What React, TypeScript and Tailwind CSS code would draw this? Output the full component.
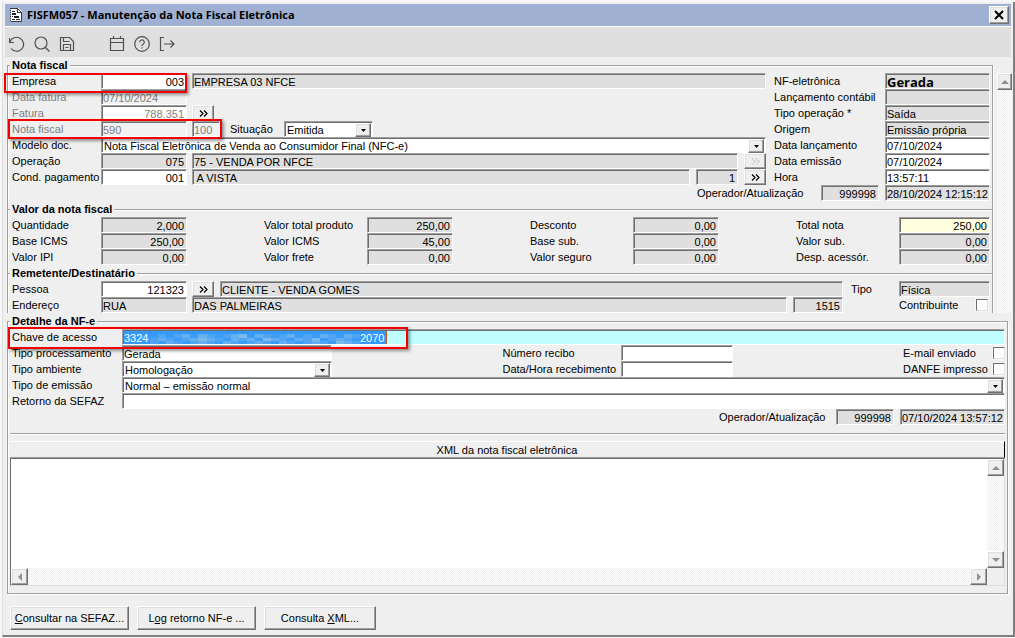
import React from 'react';
import clsx from 'clsx';

const DITHER = 'bg-[conic-gradient(#fff_25%,#ededed_0_50%,#fff_0_75%,#ededed_0)] bg-[length:2px_2px]';
const SUNKEN = 'h-4 border border-t-[#9f9f9f] border-l-[#9f9f9f] border-r-white border-b-white shadow-[inset_1px_1px_0_#6f6f6f]';
const RAISED = 'border border-t-white border-l-white border-r-[#6f6f6f] border-b-[#6f6f6f] bg-[#efefef] shadow-[inset_-1px_-1px_0_#9f9f9f,inset_1px_1px_0_#dfdfdf]';
const GROUP = 'border border-b-0 border-[#9f9f9f] shadow-[inset_1px_1px_0_#fff,1px_0_0_#fff]';

const totals = [
  [
    { id: 'quantidade', label: 'Quantidade', value: '2,000' },
    { id: 'total-produto', label: 'Valor total produto', value: '250,00' },
    { id: 'desconto', label: 'Desconto', value: '0,00' },
    { id: 'total-nota', label: 'Total nota', value: '250,00' },
  ],
  [
    { id: 'base-icms', label: 'Base ICMS', value: '250,00' },
    { id: 'valor-icms', label: 'Valor ICMS', value: '45,00' },
    { id: 'base-sub', label: 'Base sub.', value: '0,00' },
    { id: 'valor-sub', label: 'Valor sub.', value: '0,00' },
  ],
  [
    { id: 'valor-ipi', label: 'Valor IPI', value: '0,00' },
    { id: 'valor-frete', label: 'Valor frete', value: '0,00' },
    { id: 'valor-seguro', label: 'Valor seguro', value: '0,00' },
    { id: 'desp-acessor', label: 'Desp. acessór.', value: '0,00' },
  ],
];

const totalLabelWidths = ['w-[89px]', 'w-[103px]', 'w-[103px]', 'w-[103px]'];

const invoiceInfo = [
  { id: 'nf-eletronica', label: 'NF-eletrônica', value: 'Gerada', className: 'bg-[#dfdfdf] font-bold text-[13px] font-["Open_Sans",sans-serif]' },
  { id: 'lanc-contabil', label: 'Lançamento contábil', value: '', className: 'bg-[#dfdfdf]' },
  { id: 'tipo-operacao', label: 'Tipo operação *', value: 'Saída', className: 'bg-[#dfdfdf]' },
  { id: 'origem', label: 'Origem', value: 'Emissão própria', className: 'bg-[#dfdfdf]' },
  { id: 'data-lanc', label: 'Data lançamento', value: '07/10/2024', className: 'bg-white' },
  { id: 'data-emissao', label: 'Data emissão', value: '07/10/2024', className: 'bg-white' },
  { id: 'hora', label: 'Hora', value: '13:57:11', className: 'bg-white' },
];

// censored middle of the access key, one string per row of blocks
const mosaicRows = ['01012021012302101201021021', '12101232102120321021301210', '10210121021012102101210321'];
const mosaicColors = ['#3b9cf8', '#4fa5f4', '#64aff1', '#7cbaee'];

export default function App() {
  return (
    <div className="bg-[#f7f7f7] py-0.5 pl-0.5 font-['Liberation_Sans',sans-serif] text-[11px] leading-4 text-black">
      <main className="flex flex-col border-r-2 border-b-2 border-l border-r-[#7f7f7f] border-b-[#7f7f7f] border-l-[#dfdfdf] bg-[#efefef] pt-0.5 pl-0.5">
        <TitleBar />
        <Toolbar />
        <InvoiceArea />
        <DetailGroup />
        <footer className="flex gap-2 px-[5px] pt-3 pb-[5px]">
          <button className={clsx(RAISED, 'h-6 w-[119px]')}><u>C</u>onsultar na SEFAZ...</button>
          <button className={clsx(RAISED, 'h-6 w-[119px]')}>L<u>og</u> retorno NF-e ...</button>
          <button className={clsx(RAISED, 'h-6 w-[112px]')}>Consulta <u>X</u>ML...</button>
        </footer>
      </main>
    </div>
  );
}

function TitleBar() {
  return (
    <header className="mr-0.5 flex h-[22px] items-center bg-[#9fb0d2] pr-0.5 pl-1">
      <svg width="14" height="16" viewBox="0 0 14 16" shapeRendering="crispEdges">
        <path d="M2 1h7l4 4v10H2z" fill="#fff" />
        <path d="M1 1h8v1H1zM9 2h1v1H9zM10 3h1v1h-1zM11 4h1v1h-1zM12 5h1v10h-1zM2 14h11v1H2zM1 3h1v1H1zM1 5h1v1H1zM1 7h1v1H1zM1 9h1v1H1zM1 11h1v1H1zM1 13h1v1H1zM8 2h1v4H8zM8 5h4v1H8z" fill="#3a3a3a" />
        <path d="M3 4h3v1H3zM3 6h4v2H3zM5 9h5v2H5zM3 9h1v1H3zM3 12h3v1H3zM7 12h4v1H7z" fill="#222" />
      </svg>
      <h1 className="ml-1 font-['Open_Sans',sans-serif] text-[11px] font-bold">FISFM057 - Manutenção da Nota Fiscal Eletrônica</h1>
      <button aria-label="Fechar" className={clsx(RAISED, 'ml-auto flex h-[18px] w-5 items-center justify-center')}>
        <svg width="10" height="10" viewBox="0 0 10 10">
          <path d="M1 1l8 8M9 1l-8 8" stroke="#000" strokeWidth="2" />
        </svg>
      </button>
    </header>
  );
}

function Toolbar() {
  return (
    <nav className="mr-0.5 flex h-[31px] items-center border-t border-white bg-[#dfdfdf] pt-[3px] pl-1">
      <ToolButton label="Desfazer">
        <path d="M.5 2v4.500h4.500M.9 6.200A7 7 0 1 1 2 12.500" />
      </ToolButton>
      <ToolButton label="Pesquisar">
        <circle cx="7" cy="7" r="6" />
        <path d="M11.500 11.500l4 4" />
      </ToolButton>
      <ToolButton label="Salvar">
        <path d="M1.500 1.500h9l4 4v9h-13zM4.500 1.500v4h6M4.500 14.500v-6h7v6M6.500 11.500h3" />
      </ToolButton>
      <span className="w-[25px]" />
      <ToolButton label="Calendário">
        <path d="M1.500 2.500h13v12h-13zM1.500 6.500h13M4.500 0v3M11.500 0v3" />
      </ToolButton>
      <ToolButton label="Ajuda">
        <circle cx="8" cy="8" r="7.300" />
        <path d="M5.700 6.300a2.300 2.300 0 1 1 3.500 1.900c-.8.500-1.200.8-1.200 1.700M8 11.300v1.200" />
      </ToolButton>
      <ToolButton label="Sair">
        <path d="M5 1.500H1.500v13H5M5 8h10M11.500 4.500L15 8l-3.500 3.500" />
      </ToolButton>
    </nav>
  );
}

function ToolButton({ label, children }: { label: string; children: React.ReactNode }) {
  return (
    <button aria-label={label} className="w-[25px]">
      <svg width="16" height="16" viewBox="0 0 16 16" fill="none" stroke="#505050" strokeWidth="1.200">
        {children}
      </svg>
    </button>
  );
}

function InvoiceArea() {
  return (
    <div className="flex pr-px pl-0.5">
      <div className="min-w-0 flex-1">
        <fieldset className={clsx(GROUP, 'pr-0.5 pb-2 pl-1')}>
          <Legend>Nota fiscal</Legend>
          <div className="flex gap-2">
            <InvoiceFields />
            <div className="w-[216px]">
              {invoiceInfo.map((f) => (
                <div key={f.id} className="flex">
                  <Label id={f.id} className="w-[111px]">{f.label}</Label>
                  <Field id={f.id} value={f.value} className={clsx('w-[105px]', f.className)} />
                </div>
              ))}
            </div>
          </div>
          <AuditRow id="nota" date="28/10/2024 12:15:12" labelWidth="w-[124px]" />
        </fieldset>

        <fieldset className={clsx(GROUP, '-mt-2 pr-0.5 pb-2 pl-1')}>
          <Legend>Valor da nota fiscal</Legend>
          {totals.map((row, i) => (
            <div key={i} className="flex justify-between">
              {row.map((f, col) => (
                <div key={f.id} className="flex">
                  <Label id={f.id} className={totalLabelWidths[col]}>{f.label}</Label>
                  <Field
                    id={f.id}
                    value={f.value}
                    right
                    className={clsx(col === 3 ? 'w-[91px]' : 'w-[86px]', f.id === 'total-nota' ? 'bg-[#ffffdf]' : 'bg-[#dfdfdf]')}
                  />
                </div>
              ))}
            </div>
          ))}
        </fieldset>

        <fieldset className={clsx(GROUP, '-mt-2 pr-0.5 pl-1')}>
          <Legend>Remetente/Destinatário</Legend>
          <div className="flex">
            <Label id="pessoa" className="w-[89px]">Pessoa</Label>
            <Field id="pessoa" value="121323" right className="mr-[5px] w-[86px] bg-white" />
            <MoreButton label="Pessoa" />
            <Field id="pessoa-nome" value="CLIENTE - VENDA GOMES" className="ml-1.5 min-w-0 flex-1 bg-[#dfdfdf]" />
            <Label id="tipo" className="ml-2 w-12">Tipo</Label>
            <Field id="tipo" value="Física" className="w-[91px] bg-[#dfdfdf]" />
          </div>
          <div className="flex">
            <Label id="endereco" className="w-[89px]">Endereço</Label>
            <Field id="endereco" value="RUA" className="mr-[5px] w-[86px] bg-[#dfdfdf]" />
            <Field id="logradouro" value="DAS PALMEIRAS" className="mr-1.5 min-w-0 flex-1 bg-[#dfdfdf]" />
            <Field id="numero" value="1515" right className="w-[50px] bg-[#dfdfdf]" />
            <Label id="contribuinte" className="ml-14 w-[77px]">Contribuinte</Label>
            <Check id="contribuinte" />
            <span className="w-0.5" />
          </div>
        </fieldset>
      </div>

      <div className={clsx('mt-4 ml-1 flex w-[15px] flex-col', DITHER)}>
        <ScrollButton direction="up" label="Rolar para cima" />
      </div>
    </div>
  );
}

function InvoiceFields() {
  return (
    <div className="min-w-0 flex-1">
      <div className="relative flex">
        <Highlight className="top-0 -left-2 h-5 w-[183px]" />
        <Label id="empresa" className="w-[89px]">Empresa</Label>
        <Field id="empresa" value="003" right className="mr-[5px] w-[86px] bg-white" />
        <Field id="empresa-nome" value="EMPRESA 03 NFCE" className="min-w-0 flex-1 bg-[#dfdfdf]" />
      </div>
      <div className="flex text-[#808080]">
        <Label id="data-fatura" className="w-[89px]">Data fatura</Label>
        <Field id="data-fatura" value="07/10/2024" className="w-[86px] bg-[#f2f2f2]" />
      </div>
      <div className="flex text-[#808080]">
        <Label id="fatura" className="w-[89px]">Fatura</Label>
        <Field id="fatura" value="788.351" right className="mr-[5px] w-[86px] bg-white" />
        <MoreButton label="Fatura" />
      </div>
      <div className="relative flex">
        <Highlight className="-top-0.5 -left-1 h-5 w-[214px]" />
        <Label id="nota-fiscal" className="w-[89px] text-[#808080]">Nota fiscal</Label>
        <Field id="nota-fiscal" value="590" className="mr-[5px] w-[86px] bg-[#f2f2f2] text-[#808080]" />
        <Field id="serie" value="100" className="w-7 bg-[#f2f2f2] text-[#808080]" />
        <Label id="situacao" className="ml-2.5 w-[54px]">Situação</Label>
        <Select id="situacao" value="Emitida" className="w-[89px]" />
      </div>
      <div className="flex">
        <Label id="modelo" className="w-[89px]">Modelo doc.</Label>
        <Select id="modelo" value="Nota Fiscal Eletrônica de Venda ao Consumidor Final (NFC-e)" className="min-w-0 flex-1" />
      </div>
      <div className="flex">
        <Label id="operacao" className="w-[89px]">Operação</Label>
        <Field id="operacao" value="075" right className="mr-[5px] w-[86px] bg-[#dfdfdf]" />
        <Field id="operacao-nome" value="75 - VENDA POR NFCE" className="mr-1.5 min-w-0 flex-1 bg-[#dfdfdf]" />
        <MoreButton label="Operação" disabled />
      </div>
      <div className="flex">
        <Label id="pagamento" className="w-[89px]">Cond. pagamento</Label>
        <Field id="pagamento" value="001" right className="mr-[5px] w-[86px] bg-white" />
        <Field id="pagamento-nome" value=" A VISTA" className="mr-1.5 min-w-0 flex-1 bg-[#dfdfdf]" />
        <Field id="parcelas" value="1" right className="mr-1.5 w-[42px] bg-[#dfdfdf]" />
        <MoreButton label="Condição de pagamento" />
      </div>
    </div>
  );
}

function DetailGroup() {
  return (
    <fieldset className="mr-[5px] ml-0.5 border border-[#9f9f9f] pr-0.5 pb-[7px] pl-1 shadow-[inset_1px_1px_0_#fff,1px_1px_0_#fff]">
      <Legend>Detalhe da NF-e</Legend>
      <div className="relative flex">
        <Highlight className="-top-0.5 -left-1 h-[22px] w-[400px]" />
        <Label id="chave" className="w-[110px]">Chave de acesso</Label>
        <div className={clsx(SUNKEN, 'flex min-w-0 flex-1 items-center bg-[#bfffff] pt-px pl-px')}>
          <input id="chave" defaultValue="3324" className="h-[13px] w-[26px] bg-[#3399ff] text-white" />
          <svg width="210" height="13" preserveAspectRatio="none" viewBox="0 0 26 4" shapeRendering="crispEdges" className="bg-[#3399ff]">
            {mosaicRows.map((row, y) =>
              row.split('').map((c, x) => <rect key={x + '-' + y} x={x} y={y + 1} width="1" height="1" fill={mosaicColors[Number(c)]} />)
            )}
          </svg>
          <input aria-label="Final da chave" defaultValue="2070" className="h-[13px] w-[27px] border-r border-[#c06020] bg-[#3399ff] text-white" />
        </div>
      </div>
      <div className="flex">
        <Label id="processamento" className="w-[110px]">Tipo processamento</Label>
        <Field id="processamento" value="Gerada" className="w-[210px] bg-white" />
        <span className="flex-1" />
        <Label id="recibo" className="w-[118px]">Número recibo</Label>
        <Field id="recibo" value="" className="w-[112px] bg-white" />
        <span className="flex-1" />
        <Label id="email" className="w-[90px]">E-mail enviado</Label>
        <Check id="email" />
      </div>
      <div className="flex">
        <Label id="ambiente" className="w-[110px]">Tipo ambiente</Label>
        <Select id="ambiente" value="Homologação" className="w-[210px]" />
        <span className="flex-1" />
        <Label id="recebimento" className="w-[118px]">Data/Hora recebimento</Label>
        <Field id="recebimento" value="" className="w-[112px] bg-white" />
        <span className="flex-1" />
        <Label id="danfe" className="w-[90px]">DANFE impresso</Label>
        <Check id="danfe" />
      </div>
      <div className="flex">
        <Label id="emissao" className="w-[110px]">Tipo de emissão</Label>
        <Select id="emissao" value="Normal – emissão normal" className="min-w-0 flex-1" />
      </div>
      <div className="flex">
        <Label id="retorno" className="w-[110px]">Retorno da SEFAZ</Label>
        <Field id="retorno" value="" className="min-w-0 flex-1 bg-white" />
      </div>
      <AuditRow id="detalhe" date="07/10/2024 13:57:12" labelWidth="w-[117px]" />

      <div className="-ml-0.5">
        <hr className="mt-2 h-0.5 border-t border-b border-t-[#9f9f9f] border-b-white" />
        <label htmlFor="xml" className="mt-1.5 block h-[17px] border-t border-r border-b border-t-white border-r-black border-b-[#9f9f9f] text-center">
          XML da nota fiscal eletrônica
        </label>
        <div className="grid grid-cols-[1fr_17px] grid-rows-[1fr_17px] border border-t-[#6f6f6f] border-r-[#dfdfdf] border-b-[#dfdfdf] border-l-[#6f6f6f]">
          <textarea id="xml" className="h-[109px] w-full resize-none bg-white" />
          <div className={clsx('flex flex-col justify-between', DITHER)}>
            <ScrollButton direction="up" label="Subir XML" />
            <ScrollButton direction="down" label="Descer XML" />
          </div>
          <div className={clsx('flex justify-between', DITHER)}>
            <ScrollButton direction="left" label="XML à esquerda" />
            <ScrollButton direction="right" label="XML à direita" />
          </div>
        </div>
      </div>
    </fieldset>
  );
}

function Legend({ children }: { children: React.ReactNode }) {
  return <legend className="-ml-0.5 h-4 bg-[#efefef] px-0.5 font-bold">{children}</legend>;
}

function AuditRow({ id, date, labelWidth }: { id: string; date: string; labelWidth: string }) {
  return (
    <div className="flex justify-end">
      <Label id={id + '-operador'} className={labelWidth}>Operador/Atualização</Label>
      <Field id={id + '-operador'} value="999998" right className="mr-1.5 w-[58px] bg-[#dfdfdf]" />
      <Field id={id + '-data'} value={date} className="w-[105px] bg-[#dfdfdf]" />
    </div>
  );
}

function Label({ id, className, children }: { id: string; className?: string; children: React.ReactNode }) {
  return <label htmlFor={id} className={clsx('h-4 shrink-0 whitespace-nowrap', className)}>{children}</label>;
}

function Field({ id, value, right, className }: { id: string; value: string; right?: boolean; className?: string }) {
  return <input id={id} aria-label={id} defaultValue={value} className={clsx(SUNKEN, 'pt-px pl-px', right && 'pr-0.5 text-right', className)} />;
}

function Select({ id, value, className }: { id: string; value: string; className?: string }) {
  return (
    <div className={clsx('relative h-4', className)}>
      <select id={id} className={clsx(SUNKEN, 'block w-full appearance-none bg-white pl-0.5')}>
        <option>{value}</option>
      </select>
      <span className={clsx(RAISED, 'pointer-events-none absolute top-0.5 right-0.5 flex h-3.5 w-4 items-center justify-center')}>
        <svg width="5" height="3" viewBox="0 0 5 3">
          <path d="M0 0h5L2.500 3z" />
        </svg>
      </span>
    </div>
  );
}

function Check({ id }: { id: string }) {
  return (
    <input
      id={id}
      type="checkbox"
      className="mt-0.5 size-3 shrink-0 appearance-none border border-t-[#6f6f6f] border-r-[#dfdfdf] border-b-[#dfdfdf] border-l-[#6f6f6f] bg-white shadow-[0_0_0_1px_#f7f7f7]"
    />
  );
}

function MoreButton({ label, disabled }: { label: string; disabled?: boolean }) {
  return (
    <button aria-label={label} disabled={disabled} className={clsx(RAISED, 'flex h-4 w-[22px] shrink-0 items-center justify-center')}>
      <svg width="9" height="7" viewBox="0 0 9 7" fill="none" stroke={disabled ? '#b0b0b0' : '#000'} strokeWidth="1.200" strokeDasharray={disabled ? '1 1' : undefined}>
        <path d="M1 .5l3 3-3 3M5 .5l3 3-3 3" />
      </svg>
    </button>
  );
}

const arrows = {
  up: 'M0 6l4-4 4 4z',
  down: 'M0 2l4 4 4-4z',
  left: 'M6 0L2 4l4 4z',
  right: 'M2 0l4 4-4 4z',
};

function ScrollButton({ direction, label }: { direction: keyof typeof arrows; label: string }) {
  return (
    <button aria-label={label} className={clsx(RAISED, 'flex h-[17px] w-full max-w-[17px] items-center justify-center')}>
      <svg width="8" height="8" viewBox="0 0 8 8" fill="#8f8f8f">
        <path d={arrows[direction]} />
      </svg>
    </button>
  );
}

function Highlight({ className }: { className: string }) {
  return <span className={clsx('pointer-events-none absolute z-10 border-2 border-[#f00000] shadow-[2px_2px_3px_#0006]', className)} />;
}
